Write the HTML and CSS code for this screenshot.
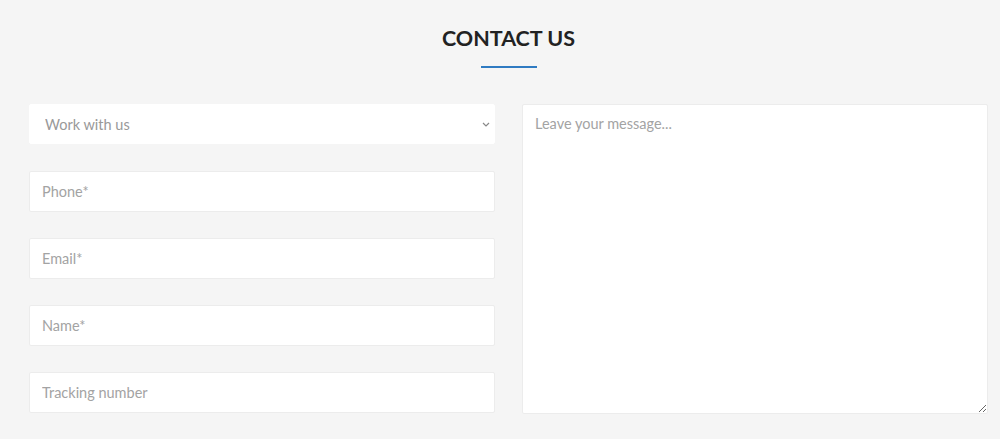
FILE: index.html
```html
<!DOCTYPE html>
<html lang="en">
<head>
    <meta charset="UTF-8">
    <title>Contact us</title>
    <link rel="stylesheet" href="styles.css">
</head>
<body>

<section class="contact">
    <h2 class="contact-title">CONTACT US</h2>
    <div class="contact-line"></div>

    <form class="contact-form">
        <div class="contact-fields">
            <select class="field field-select">
                <option>Work with us</option>
                <option>Shipping</option>
                <option>Other</option>
            </select>
            <input class="field" type="text" placeholder="Phone*">
            <input class="field" type="email" placeholder="Email*">
            <input class="field" type="text" placeholder="Name*">
            <input class="field" type="text" placeholder="Tracking number">
        </div>
        <textarea class="field field-message" placeholder="Leave your message..."></textarea>
    </form>
</section>

</body>
</html>
```

FILE: styles.css
```css
body {
    margin: 0;
    background: #f5f5f5;
    font-family: Lato, "Open Sans", sans-serif;
}

.contact {
    width: 959px;
    margin-left: 29px;
    padding-top: 22px;
}

.contact-title {
    margin: 0;
    text-align: center;
    font-size: 21.5px;
    font-weight: 700;
    color: #222;
    line-height: 32px;
}

.contact-line {
    width: 56px;
    height: 2px;
    margin: 12px auto 0;
    background: #2f7bc2;
}

.contact-form {
    display: flex;
    gap: 27px;
    margin-top: 36px;
}

.contact-fields {
    display: flex;
    flex-direction: column;
    gap: 26px;
    width: 466px;
}

.field {
    box-sizing: border-box;
    height: 41px;
    border: 1px solid #ececec;
    border-radius: 2px;
    background: #fff;
    padding: 0 12px;
    font-family: inherit;
    font-size: 14.5px;
    color: #999;
    outline: none;
}

.field::placeholder {
    color: #a3a3a3;
}

.field-select {
    height: 40px;
    margin-bottom: 1px;
    padding-left: 15px;
    border-color: #fff;
    color: #999;
    appearance: none;
    background-image: url("data:image/svg+xml,%3Csvg xmlns='http://www.w3.org/2000/svg' width='8' height='5' viewBox='0 0 8 5'%3E%3Cpath d='M1 1l3 3 3-3' fill='none' stroke='%23888' stroke-width='1.2'/%3E%3C/svg%3E");
    background-repeat: no-repeat;
    background-position: right 4px center;
}

.field-message {
    flex: 1;
    height: 310px;
    padding: 10px 12px;
    resize: vertical;
}
```
